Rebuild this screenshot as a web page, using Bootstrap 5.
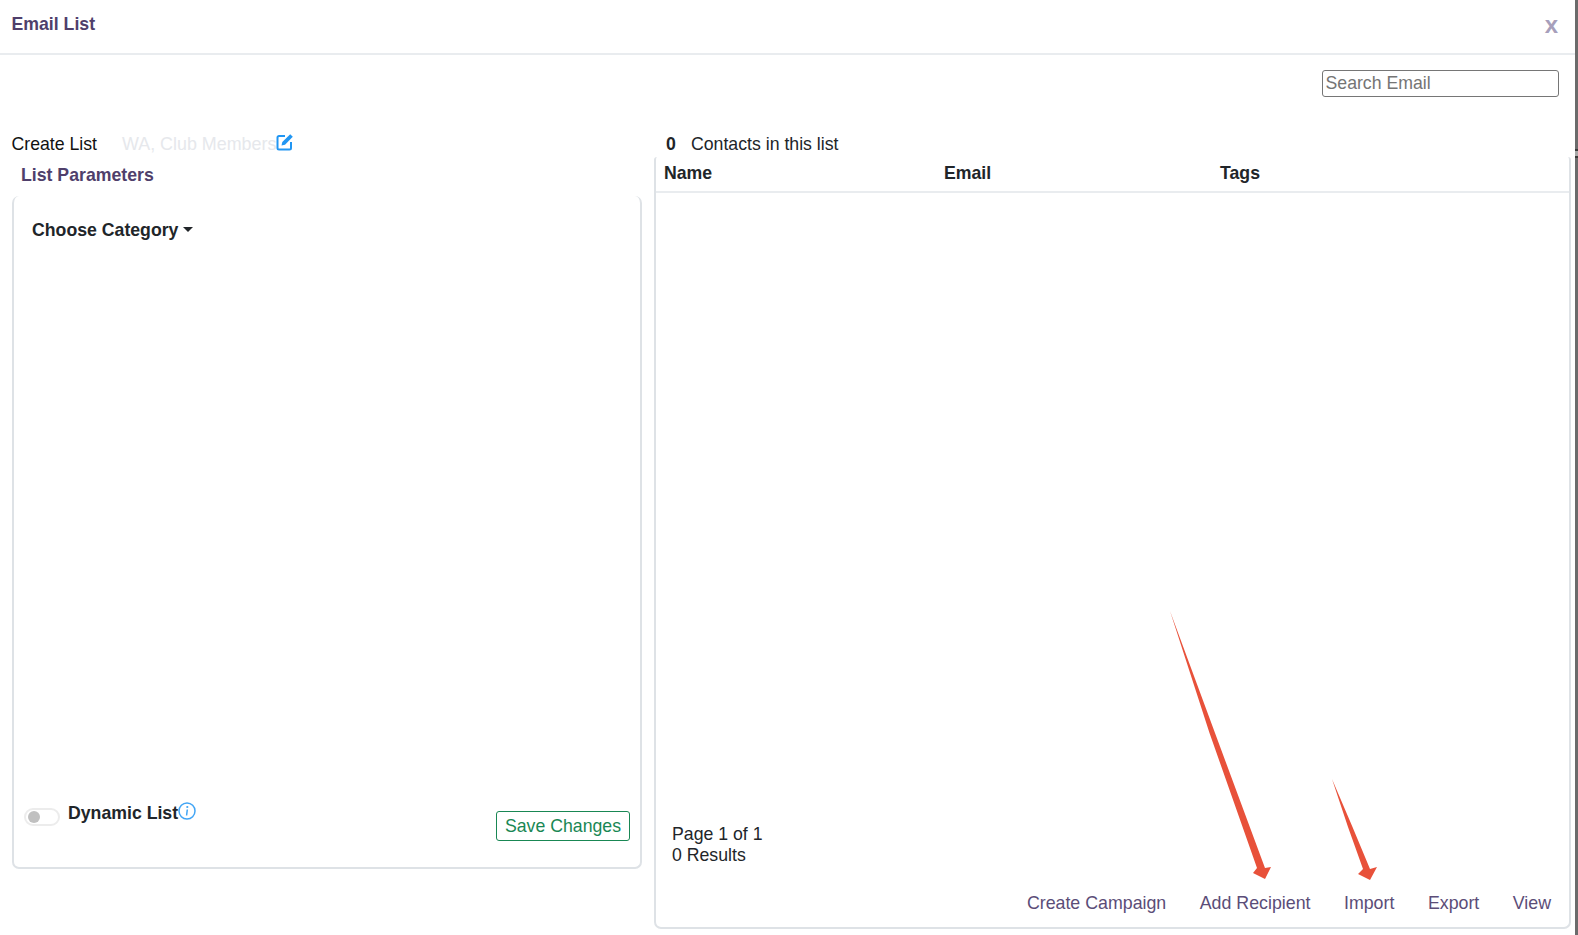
<!DOCTYPE html>
<html lang="en">
<head>
    <meta charset="UTF-8">
    <title>Email List</title>
    <link href="https://cdn.jsdelivr.net/npm/bootstrap@5.3.3/dist/css/bootstrap.min.css" rel="stylesheet">
    <style>
        body {
            font-family: "Liberation Sans", Arial, sans-serif;
            font-size: 17.7px;
            color: #212529;
            background: #fff;
            overflow: hidden;
        }
        .page-shell {
            position: relative;
            width: 1578px;
            height: 935px;
            border-right: 3px solid #6b6b6b;
        }
        .edge-mark {
            position: absolute;
            right: -3px;
            top: 149px;
            width: 3px;
            height: 9px;
            border-top: 2px solid #3a3a3a;
            border-bottom: 2px solid #3a3a3a;
            background: #a8a8a8;
        }
        .head-bar {
            height: 55px;
            padding: 12px 17px 0 11.500px;
            border-bottom: 2px solid #e9ecef;
        }
        .head-title {
            font-size: 17.7px;
            font-weight: 700;
            line-height: 24px;
            color: #4f3f6b;
            margin: 0;
        }
        .close-x {
            font-size: 24px;
            font-weight: 700;
            line-height: 28px;
            margin-top: -1px;
            color: #a79fbb;
        }
        .search-bar {
            padding: 15px 16px 0 0;
            height: 78px;
        }
        .search-box {
            width: 237px;
            height: 27px;
            font-size: 17.7px;
            padding: 0 2.500px;
            border: 1px solid #767676;
            border-radius: 3px;
            outline: 0;
        }
        .search-box::placeholder { color: #757575; opacity: 1; }
        .left-col { width: 630px; margin-left: 12px; }
        .right-col { width: 917px; margin-left: 12px; }
        .create-row { height: 24px; line-height: 22px; color: #111; margin-left: -0.500px; }
        .create-label { width: 110.500px; }
        .list-name { color: #e6e8ec; font-size: 17.9px; }
        .params-title {
            font-weight: 700;
            line-height: 24px;
            color: #4f3f6b;
            padding: 6px 0 0 9px;
            height: 39px;
        }
        .params-card {
            height: 673px;
            border: 2px solid #dee2e6;
            border-top: 0;
            border-radius: 7px;
            padding: 21px 10px 0 9.500px;
        }
        .category-btn {
            font-size: 17.7px;
            font-weight: 700;
            color: #212529;
            border: 0;
            background: none;
            padding: 0 0 0 8.500px;
            line-height: 24px;
        }
        .params-foot { margin-top: 557px; }
        .toggle-track {
            display: inline-block;
            position: relative;
            width: 36px;
            height: 18px;
            margin-top: 7px;
            border: 2px solid #ececec;
            border-radius: 9px;
        }
        .toggle-track::after {
            content: "";
            position: absolute;
            left: 2px;
            top: 1px;
            width: 12px;
            height: 12px;
            border-radius: 50%;
            background: #c0c0c0;
        }
        .dynamic-label { font-weight: 700; line-height: 24px; margin-left: 8.500px; }
        .info-icon { margin-top: 1px; }
        .save-btn {
            font-size: 17.7px;
            line-height: 22px;
            padding: 3px 8px;
            color: #198754;
            border: 1px solid #198754;
            border-radius: 3px;
            margin-top: 10px;
        }
        .contacts-row { height: 24px; line-height: 22px; padding-left: 12px; color: #212529; }
        .contacts-count { font-weight: 700; width: 25px; }
        .contacts-panel {
            height: 772px;
            border: 2px solid #dee2e6;
            border-top: 0;
            border-radius: 3px 3px 7px 7px;
        }
        .contacts-table { margin: 0; }
        .contacts-table th {
            font-size: 17.7px;
            line-height: 24px;
            height: 35px;
            padding: 3px 8px 6px;
            border-bottom: 2px solid #e9ecef;
        }
        .pager-text { padding: 0 0 0 16px; line-height: 20.500px; color: #212529; }
        .action-row { padding: 26px 18px 12px 0; gap: 33.500px; font-size: 17.8px; }
        .action-link { color: #5b4d78; text-decoration: none; line-height: 24px; }
        .arrow-layer { position: absolute; left: 0; top: 0; pointer-events: none; }
    </style>
</head>
<body>
    <div class="page-shell">
        <span class="edge-mark"></span>
        <div class="head-bar d-flex justify-content-between align-items-start">
            <h1 class="head-title">Email List</h1>
            <span class="close-x">x</span>
        </div>

        <div class="search-bar d-flex justify-content-end">
            <input type="text" class="search-box" placeholder="Search Email">
        </div>

        <div class="d-flex">
            <div class="left-col">
                <div class="create-row d-flex">
                    <span class="create-label">Create List</span>
                    <span class="list-name">WA, Club Members</span>
                    <svg width="18" height="18" viewBox="0 0 18 18" fill="none">
                        <path d="M9 3H3a1.500 1.500 0 0 0-1.500 1.500V15A1.500 1.500 0 0 0 3 16.500h10.500A1.500 1.500 0 0 0 15 15V9" stroke="#2196f3" stroke-width="2"/>
                        <path d="M5.500 12.500l.8-3.500L14.200 1.200l2.600 2.600L9 11.700z" fill="#2196f3"/>
                    </svg>
                </div>
                <div class="params-title">List Parameters</div>
                <div class="params-card">
                    <button class="category-btn dropdown-toggle" type="button">Choose Category</button>
                    <div class="params-foot d-flex justify-content-between align-items-start">
                        <div class="d-flex align-items-start">
                            <span class="toggle-track"></span>
                            <span class="dynamic-label">Dynamic List</span>
                            <svg class="info-icon" width="18" height="18" viewBox="0 0 18 18" fill="none">
                                <circle cx="9" cy="9" r="8" stroke="#42a5f5" stroke-width="1.500"/>
                                <circle cx="9.300" cy="5" r="1.100" fill="#42a5f5"/>
                                <path d="M9.300 7.500L8.600 13.500" stroke="#42a5f5" stroke-width="1.500"/>
                            </svg>
                        </div>
                        <button class="btn save-btn" type="button">Save Changes</button>
                    </div>
                </div>
            </div>

            <div class="right-col">
                <div class="contacts-row d-flex">
                    <span class="contacts-count">0</span>
                    <span>Contacts in this list</span>
                </div>
                <div class="contacts-panel d-flex flex-column">
                    <table class="table contacts-table">
                        <thead>
                            <tr>
                                <th style="width: 280px">Name</th>
                                <th style="width: 276px">Email</th>
                                <th>Tags</th>
                            </tr>
                        </thead>
                    </table>
                    <div class="mt-auto">
                        <div class="pager-text">Page 1 of 1<br>0 Results</div>
                        <div class="action-row d-flex justify-content-end">
                            <a class="action-link" href="#">Create Campaign</a>
                            <a class="action-link" href="#">Add Recipient</a>
                            <a class="action-link" href="#">Import</a>
                            <a class="action-link" href="#">Export</a>
                            <a class="action-link" href="#">View</a>
                        </div>
                    </div>
                </div>
            </div>
        </div>

        <!-- red annotation arrows on top of the screenshot -->
        <svg class="arrow-layer" width="1578" height="935" viewBox="0 0 1578 935">
            <polygon points="1170,611 1215,733 1265,868 1271,867 1265,879 1253,873 1257,868 1209.500,733" fill="#e8513a"/>
            <polygon points="1332,779 1352.500,827 1370,869 1377,867 1370,880 1358,874 1363,869 1348,827" fill="#e8513a"/>
        </svg>
    </div>

    <script src="https://cdn.jsdelivr.net/npm/bootstrap@5.3.3/dist/js/bootstrap.bundle.min.js"></script>
</body>
</html>
